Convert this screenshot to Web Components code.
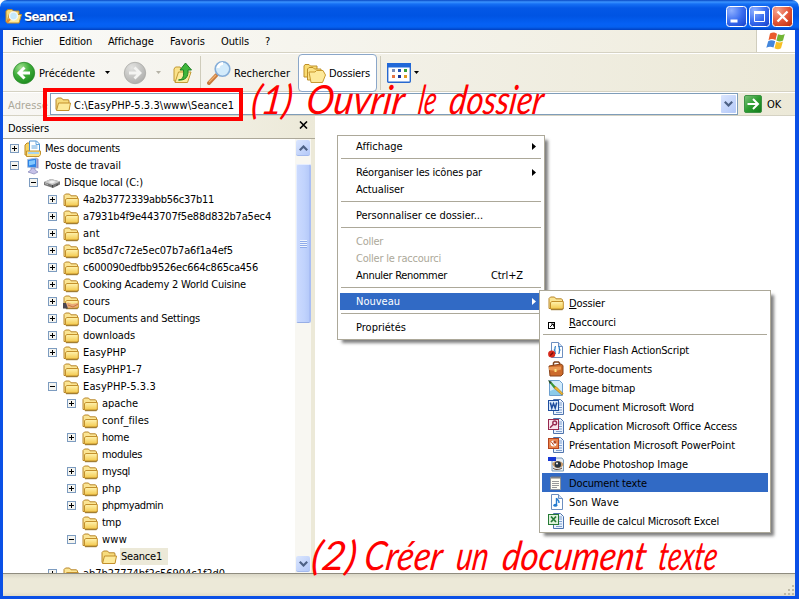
<!DOCTYPE html>
<html lang="fr">
<head>
<meta charset="utf-8">
<title>Seance1</title>
<style>
html,body{margin:0;padding:0;width:799px;height:599px;overflow:hidden;background:#fff}
body{font:11px/17px "DejaVu Sans Condensed","DejaVu Sans",sans-serif;color:#000;position:relative}
</style>
</head>
<body>
<xp-window></xp-window>
<script>
const define=(name,html,init)=>{
  const t=document.createElement('template');t.innerHTML=html;
  customElements.define(name,class extends HTMLElement{
    constructor(){super();this.attachShadow({mode:'open'}).append(t.content.cloneNode(true));}
    connectedCallback(){if(!this.ready){this.ready=true;init&&init.call(this,this.shadowRoot);}}
  });
};

/* Icon drawings */
const page='<path d="M3.5 .5h7l4 4v11h-11z" fill="#fff" stroke="#6d8fc0"/><path d="M10.500.5v4h4" fill="#cfe0f5" stroke="#6d8fc0"/>';
const office=(c,d,g)=>`<path d="M5.500.5h7l3 3v12h-10z" fill="#eaf2fd" stroke="#4f74ad"/><path d="M11 4h3M11 6h3M11 8.500h3M11 11h3M8 13.500h6" stroke="#7f9fce"/><rect x=".5" y="1.500" width="10" height="10" fill="${d}" stroke="${c}"/>${g}`;
const winBtn=(a,b,c,g)=>`<defs><radialGradient id="g" cx=".25" cy=".2" r="1"><stop offset="0" stop-color="${a}"/><stop offset=".55" stop-color="${b}"/><stop offset="1" stop-color="${c}"/></radialGradient></defs><rect x=".5" y=".5" width="20" height="20" rx="3" fill="url(#g)" stroke="#fff"/>${g}`;
const folder='<defs><linearGradient id="f" x2="0" y2="1"><stop offset="0" stop-color="#fff3b0"/><stop offset="1" stop-color="#f3c84b"/></linearGradient></defs><path d="M1 13.500V3.500L2.500 2H6.500L8 3.800H13.500L14.500 5V13.500z" fill="#fbe594" stroke="#b8862a"/><path d="M2.500 14V7.500L4 6.500H15.300V13L14 14z" fill="url(#f)" stroke="#c3902c"/><path d="M3 14.700h11.500L15.800 13.300" fill="none" stroke="#8a6210" stroke-width=".9"/>';
const ICONS={
folder:[16,16,folder],
folderopen:[16,16,'<path d="M1 13.500V3.500L2.500 2H6.500L8 3.800H13.500L14 5V13.500z" fill="#f7dc7d" stroke="#b8862a"/><path d="M1.500 14.500L3.500 7H15.500L14 14.500z" fill="#fdea9a" stroke="#c3902c"/>'],
shared:[16,16,folder+'<path d="M2 13.500V10l3-1.500 4 1.500 6-1v3.500l-5 1.500z" fill="#e9a979"/><path d="M0 9h3l2 5.500H0z" fill="#4b4650"/><path d="M5 11l5 2 5-3" fill="none" stroke="#c9783f"/>'],
docs:[18,18,'<path d="M1 15V5l2-2h5v13z" fill="#f7d463" stroke="#bd8a24"/><path d="M5.500 1h7l3 3v9h-10z" fill="#fff" stroke="#4e90cf"/><path d="M12 1v3.500h3.500M7.500 6h6M7.500 8h6" stroke="#62a5df" fill="none"/><path d="M2.500 11h14v3.500L15 16.500H2.500z" fill="#fbe38a" stroke="#c49430"/><path d="M4 12h11v2H4z" fill="#a7d6f3"/>'],
computer:[18,18,'<path d="M3.500 2.500L12.500 1v10l-9-.8z" fill="#2d83e6" stroke="#a9bfdf"/><path d="M5 4l6-1v4L5 8.500z" fill="#82c8ff"/><path d="M12.700 1l1.800 1v9.500l-2-.5z" fill="#9290c4"/><path d="M7 11l4 .3V13l3 2-4 2-6-2 3-2z" fill="#c6c2e8" stroke="#8585b8" stroke-width=".7"/>'],
disk:[18,18,'<path d="M1 8l7-3 9 2.500v3L10 14 1 11z" fill="#777"/><path d="M1 8l7-3 9 2.500L9.500 11z" fill="#c9c9c9"/><path d="M5 8l4-1.500 4 1.200L9 9.500z" fill="#f3f3f3"/><path d="M9.500 11v2.500M13 11.500l2-1" stroke="#444"/><path d="M2 9.500l3 1" stroke="#bbb"/>'],
title:[17,17,'<path d="M1 14V3l2-1.500h4L8.500 3H14v11z" fill="#f8dc78" stroke="#b8862a"/><path d="M2 15L4 6.500h12.500L14 15z" fill="#fdea9a" stroke="#c3902c"/><circle cx="8.500" cy="8" r="4" fill="#c4e8fb" stroke="#eef6fa" stroke-width="1.500"/><path d="M5 11L2 14.500" stroke="#e9862c" stroke-width="2"/>'],
min:[21,21,winBtn('#8fb0ff','#3a6df0','#1a45cf','<rect x="4.500" y="13.500" width="7" height="3" fill="#fff"/>')],
max:[21,21,winBtn('#8fb0ff','#3a6df0','#1a45cf','<path d="M5.500 5.500h10v10h-10z" fill="none" stroke="#fff"/><path d="M5 6.500h11" stroke="#fff" stroke-width="3"/>')],
close:[21,21,winBtn('#f5a48e','#e4573a','#c3310f','<path d="M5.500 5.500l10 10M15.500 5.500l-10 10" stroke="#fff" stroke-width="2.300"/>')],
back:[24,24,'<defs><radialGradient id="b" cx=".35" cy=".25" r=".8"><stop offset="0" stop-color="#a0e08e"/><stop offset=".5" stop-color="#3fae3b"/><stop offset="1" stop-color="#1c8a1e"/></radialGradient></defs><circle cx="12" cy="12" r="10.700" fill="url(#b)" stroke="#2a8a2a" stroke-width=".8"/><path d="M18 12H7.500M12.500 6.500L7 12l5.500 5.500" fill="none" stroke="#fff" stroke-width="3"/>'],
fwd:[24,24,'<defs><radialGradient id="n" cx=".35" cy=".25" r=".8"><stop offset="0" stop-color="#e2e2e0"/><stop offset="1" stop-color="#aeaeac"/></radialGradient></defs><circle cx="12" cy="12" r="10.700" fill="url(#n)" stroke="#a9a9a6" stroke-width=".8"/><path d="M6 12h10.500M11.500 6.500L17 12l-5.500 5.500" fill="none" stroke="#f4f4f2" stroke-width="2.800"/>'],
up:[22,24,'<path d="M2 20V8l1.500-2H8l1.500 2H12v13z" fill="#fbe28b" stroke="#c29a35"/><path d="M3 21.500L6.500 11H19l-3.500 10.500z" fill="#fdeb9d" stroke="#c29a35"/><path d="M6.500 19c5-.5 5.500-4 5-10H8l5.500-7L19.500 9H16c.5 7-2.500 10.500-9.500 10z" fill="#3fb63b" stroke="#1d7f22"/>'],
search:[25,25,'<path d="M9.500 15L2 23" stroke="#c77a3d" stroke-width="4" stroke-linecap="round"/><path d="M9 15L2 22" stroke="#f1b26f" stroke-width="1.200"/><circle cx="15.500" cy="9" r="7.300" fill="#d3ebfb" stroke="#86aed8" stroke-width="1.600"/><path d="M11 8a5 5 0 0 1 5-4.500" stroke="#fff" stroke-width="3" fill="none"/>'],
folders:[24,22,'<path d="M1 15V4l1-1.500h4L7.500 4H14v11z" fill="#f9dc72" stroke="#bf9028"/><path d="M4.500 18V7L6 5.500h4L11.500 7H18v11z" fill="#fbe286" stroke="#bf9028"/><path d="M8 20.500L6 10h6l1.500-1.500H20L22.500 13 19.500 20.500z" fill="#fde99a" stroke="#c8992e"/>'],
views:[24,20,'<rect x=".7" y=".7" width="22.600" height="18.600" rx="1" fill="#fff" stroke="#2869cf" stroke-width="1.400"/><path d="M0 0h24v4.500H0z" fill="#2168d8"/><g><path d="M5 6h3v3H5z" fill="#7c8fb8"/><path d="M11 6h3v3h-3z" fill="#2855b5"/><path d="M17 6h3v3h-3z" fill="#35a03b"/><path d="M5 12h3v3H5z" fill="#e77442"/><path d="M11 12h3v3h-3z" fill="#1c3795"/><path d="M17 12h3v3h-3z" fill="#e19b20"/></g>'],
arrow:[5,3,'<path d="M0 0h5L2.500 3z" fill="currentColor"/>'],
right:[4,7,'<path d="M0 0l4 3.500L0 7z" fill="currentColor"/>'],
flag:[22,20,'<path d="M5 2.500c3-1.700 4.500-1 7 .2L10.500 9c-3-1.300-4.500-1.200-7 .2z" fill="#ea5b2c"/><path d="M13 3.200c3 1.200 4.500 1 6.800-.2L18 9.600c-2.500 1.200-4 1.100-6.600 0z" fill="#72b536"/><path d="M3.200 10.200c2.500-1.500 4-1.300 7 0L8.500 16.500c-2.500-1.200-4.500-1.200-7.200.3z" fill="#4386dc"/><path d="M11.200 10.700c2.700 1.200 4.200 1 6.700-.1L16 17.300c-2.500 1.300-4 1-6.500 0z" fill="#f7bf25"/>'],
go:[18,18,'<defs><linearGradient id="o" x2="1" y2="1"><stop offset="0" stop-color="#7fc47c"/><stop offset=".5" stop-color="#2c9c30"/><stop offset="1" stop-color="#127a1a"/></linearGradient></defs><rect x=".5" y=".5" width="17" height="17" rx="1.500" fill="url(#o)" stroke="#3f9346"/><path d="M3.500 9h10M9 4l5 5-5 5" fill="none" stroke="#fff" stroke-width="2"/>'],
x:[9,8,'<path d="M1 .5l7 7M8 .5l-7 7" stroke="#000" stroke-width="1.600"/>'],
down:[9,6,'<path d="M.8.800L4.500 4.500 8.200.8" fill="none" stroke="#4d6185" stroke-width="2.200"/>'],
upc:[9,6,'<path d="M.8 5.200L4.500 1.500 8.200 5.200" fill="none" stroke="#4d6185" stroke-width="2.200"/>'],
shortcut:[16,16,'<rect x=".5" y="8.500" width="6" height="6" fill="#fff" stroke="#000"/><path d="M2 13L5 10M3 10h2.500v2.500" stroke="#000" fill="none" stroke-width=".9"/>'],
flash:[16,16,page+'<path d="M8 4.500c-2 0 0 2.500-1.600 3.500 1.600 1-.4 3.500 1.600 3.500M10.300 4.500c2 0 0 2.500 1.600 3.500-1.600 1 .4 3.500-1.600 3.500" fill="none" stroke="#2679c5" stroke-width="1.200"/><circle cx="3.700" cy="12" r="3.600" fill="#d72a1c"/><path d="M2.200 13.500l3-3" stroke="#7c0e08" stroke-width="1.300"/>'],
brief:[16,16,'<path d="M5.500 5V2l1-1h4l1 1v3" fill="none" stroke="#7d411a" stroke-width="1.500"/><path d="M1 5l12-2 2 1.500V13l-2 2H2z" fill="#cc6a2a" stroke="#8a441a"/><path d="M1 6l12-.5v3L8 10 1 9z" fill="#ea9852"/><path d="M6.500 8h2v3h-2z" fill="#ffe17b"/>'],
bitmap:[16,16,'<path d="M1.500.5h10l3 3v12h-13z" fill="#d3ebfb" stroke="#6d9fce"/><path d="M2 11l5-2 7 3v3H2z" fill="#8dcbe9"/><path d="M1 2l3 .5L8 7 6 8.500z" fill="#3c973a"/><path d="M6 8l2-1.500 7 7-1 1.500z" fill="#f1b72f" stroke="#a66d0c" stroke-width=".6"/><path d="M0 0l4 2-2 2z" fill="#264a26"/>'],
word:[16,16,office('#1f4e9f','#dce9fb','<path d="M2.300 3.500L3.800 9l1.700-4.500L7.200 9l1.500-5.500" fill="none" stroke="#1d4b9c" stroke-width="1.500"/>')],
access:[16,16,office('#97284f','#f8e3ec','<circle cx="6.700" cy="4.900" r="1.900" fill="none" stroke="#97284f" stroke-width="1.400"/><path d="M5.500 6.200L2 9.700" stroke="#97284f" stroke-width="1.500"/>')],
ppt:[16,16,office('#b4441e','#e9844d','<circle cx="5.500" cy="6.500" r="3" fill="#fff"/><path d="M5.500 6.500V3.500a3 3 0 0 1 3 3z" fill="#b4441e"/><path d="M3 4.500l3 4" stroke="#b4441e"/>')],
excel:[16,16,office('#257a35','#dff2dc','<path d="M3 3.500l5 5.500M8 3.500L3 9" stroke="#257a35" stroke-width="1.700"/>')],
psd:[16,16,'<path d="M4 2h10l1.500 2v11H4z" fill="#e6edf4" stroke="#7c9cba"/><path d="M4 8c2-4 9-4 11.500 0-1 5-9 6-11.500 0z" fill="#c79a6a"/><circle cx="9.800" cy="8.500" r="3.200" fill="#27333f"/><circle cx="9" cy="7.500" r="1" fill="#fff"/><path d="M0 1h8v4H0z" fill="#1739d6"/><path d="M5 12c2 2 6 2 9 0" stroke="#594236" fill="none"/>'],
text:[16,16,'<path d="M2.500 2.500h10v12h-10z" fill="#fffef2" stroke="#8b929c"/><path d="M4 1v3M6 1v3M8 1v3M10 1v3M12 1v3" stroke="#777"/><path d="M4 6.500h7M4 8.500h7M4 10.500h7M4 12.500h5" stroke="#999"/>'],
wave:[16,16,page+'<path d="M8.500 4v7.500M8.500 4c.5 2 3 2 2.500 5" fill="none" stroke="#247bd0" stroke-width="1.400"/><ellipse cx="7.300" cy="11.300" rx="2" ry="1.500" fill="#247bd0"/>'],
plus:[9,9,'<rect x=".5" y=".5" width="8" height="8" fill="#f4f4f0" stroke="#7d9cc0"/><path d="M2 4.500h5M4.500 2v5" stroke="#000"/>'],
minus:[9,9,'<rect x=".5" y=".5" width="8" height="8" fill="#f4f4f0" stroke="#7d9cc0"/><path d="M2 4.500h5" stroke="#000"/>'],
grip:[12,12,'<g fill="#bdb9a5"><path d="M9 1h2v2H9zM9 5h2v2H9zM9 9h2v2H9zM5 5h2v2H5zM5 9h2v2H5zM1 9h2v2H1z"/></g>']
};
define('xp-icon','<style>:host{display:block;flex:none}svg{display:block}</style><div></div>',function(r){
  const [w,h,s]=ICONS[this.getAttribute('name')];
  r.querySelector('div').innerHTML=`<svg width="${w}" height="${h}" viewBox="0 0 ${w} ${h}">${s}</svg>`;
});

/* Label that spreads its letters over the width given in "w" */
define('xp-label','<style>:host{display:block;flex:none;white-space:pre}span{display:inline-block}</style><span></span>',function(r){
  const s=r.querySelector('span'),w=+this.getAttribute('w'),t=this.getAttribute('text'),k=this.getAttribute('key');
  if(k){const u=document.createElement('u');u.textContent=t[0];s.append(u,t.slice(1));}else s.textContent=t;
  this.style.width=w+'px';
  s.style.letterSpacing=((w-s.getBoundingClientRect().width)/t.length)+'px';
});

define('tree-row',`<style>
:host{display:flex;align-items:center;height:17px;flex:none}
.t{width:9px;margin-right:5px}.i{width:20px;display:flex;justify-content:center;flex:none}
.l{padding:1px 1px 0;line-height:16px}
:host([sel]) .l{background:#ece9d8;padding-right:6px}
</style><div class="t"></div><div class="i"></div><div class="l"></div>`,function(r){
  const a=n=>this.getAttribute(n);
  this.style.paddingLeft=(7+19*a('d'))+'px';
  if(a('t'))r.querySelector('.t').innerHTML=`<xp-icon name="${a('t')}"></xp-icon>`;
  r.querySelector('.i').innerHTML=`<xp-icon name="${a('i')}" style="margin-left:-2px"></xp-icon>`;
  r.querySelector('.l').innerHTML=`<xp-label w="${a('w')}" text="${a('l')}"></xp-label>`;
});

define('xp-titlebar',`<style>
:host{display:flex;align-items:center;height:30px;box-sizing:border-box;padding:2px 6px 0 5px;border-radius:7px 7px 0 0;
background:linear-gradient(#0848c4 0,#3b94ff 2px,#1670f4 4px,#0458e6 8px,#0054e3 16px,#0561f5 24px,#0560f0 27px,#0040c0 30px)}
xp-label{margin:2px 0 0 2px;color:#fff;font:bold 13px/18px "DejaVu Sans Condensed",sans-serif;text-shadow:1px 1px 1px #0a246a}
.b{display:flex;gap:2px;margin-left:auto}
</style><xp-icon name="title"></xp-icon><xp-label w="50" text="Seance1"></xp-label><div class="b"><xp-icon name="min"></xp-icon><xp-icon name="max"></xp-icon><xp-icon name="close"></xp-icon></div>`);

define('xp-menubar',`<style>
:host{display:flex;align-items:stretch;height:22px;border-bottom:1px solid #d5d2c3;background:linear-gradient(90deg,#fafaf8,#efecdd)}
.m{display:flex;gap:16px;padding:3px 0 0 9px;flex:1}
.f{width:38px;background:#fff;border-left:1px solid #d0cdbd;display:flex;justify-content:center;align-items:center}
</style><div class="m"><xp-label w="31" text="Fichier"></xp-label><xp-label w="33" text="Edition"></xp-label><xp-label w="46" text="Affichage"></xp-label><xp-label w="35" text="Favoris"></xp-label><xp-label w="28" text="Outils"></xp-label><xp-label w="6" text="?"></xp-label></div><div class="f"><xp-icon name="flag"></xp-icon></div>`);

define('xp-toolbar',`<style>
:host{display:flex;align-items:center;height:39px;box-sizing:border-box;border-top:1px solid #fff;border-bottom:1px solid #d5d2c3;background:linear-gradient(90deg,#f8f7f4,#ece9d8)}
.s{width:1px;height:34px;background:#cfccbb}
xp-label{padding-top:2px}
.d{display:flex;align-items:center;box-sizing:border-box;width:79px;height:38px;padding-left:4px;gap:3px;border:1px solid #8ba7c9;border-radius:4px;background:#fff;margin-left:8px}
.g{color:#b5b2a6}
</style><xp-icon name="back" style="margin-left:9px"></xp-icon><xp-label w="56" text="Précédente" style="margin-left:3px"></xp-label><xp-icon name="arrow" style="margin-left:10px"></xp-icon>
<xp-icon name="fwd" style="margin-left:13px"></xp-icon><xp-icon class="g" name="arrow" style="margin-left:9px"></xp-icon><xp-icon name="up" style="margin-left:11px"></xp-icon><div class="s" style="margin-left:6px"></div>
<xp-icon name="search" style="margin-left:6px"></xp-icon><xp-label w="56" text="Rechercher" style="margin-left:2px"></xp-label><div class="d"><xp-icon name="folders"></xp-icon><xp-label w="41" text="Dossiers" style="margin-left:-1px"></xp-label></div>
<div class="s" style="margin-left:3px"></div><xp-icon name="views" style="margin-left:6px"></xp-icon><xp-icon name="arrow" style="margin-left:3px"></xp-icon>`);

define('xp-address',`<style>
:host{display:flex;align-items:center;height:24px;box-sizing:border-box;padding-left:5px;border-top:1px solid #fff;border-bottom:1px solid #d5d2c3;background:linear-gradient(90deg,#f8f7f4,#ece9d8)}
.a{color:#aca899}
.box{display:flex;align-items:center;box-sizing:border-box;width:688px;height:22px;margin-left:2px;border:1px solid #7f9db9;background:#fff;padding:0 1px 0 4px}
.dd{width:15px;height:18px;margin-left:auto;display:flex;align-items:center;justify-content:center;border-radius:1px;background:linear-gradient(135deg,#dbe6fe,#b3c8f8)}
</style><xp-label class="a" w="40" text="Adresse" style="padding-top:2px"></xp-label><div class="box"><xp-icon name="folderopen"></xp-icon><xp-label w="160" text="C:\\EasyPHP-5.3.3\\www\\Seance1" style="margin-left:3px;padding-top:3px"></xp-label><div class="dd"><xp-icon name="down"></xp-icon></div></div><xp-icon name="go" style="margin-left:6px"></xp-icon><xp-label w="14" text="OK" style="margin-left:5px;padding-top:1px"></xp-label>`);

define('xp-scrollbar',`<style>
:host{display:flex;flex-direction:column;width:16px;flex:none;background:#f8f7f2}
.b{height:15px;margin:1px;border-radius:2px;display:flex;align-items:center;justify-content:center;background:linear-gradient(135deg,#dbe6fe,#b3c8f8);border-bottom:1px solid #a3b9ec}
.th{box-sizing:border-box;height:159px;margin:7px 0 0 1px;border-radius:2px;border:1px solid #e5edff;border-bottom-color:#97aee6;border-right:2px solid #a9bef5;background:linear-gradient(90deg,#cbdafe,#c1d3fd 60%,#b6caf9);display:flex;align-items:center;justify-content:center}
.g{width:7px;height:8px;background:repeating-linear-gradient(#eef4fe 0 1px,#8fabea 1px 2px)}
</style><div class="b"><xp-icon name="upc"></xp-icon></div><div class="th"><div class="g"></div></div><div class="b" style="margin-top:auto"><xp-icon name="down"></xp-icon></div>`);

const H='plus',F='folder';
const ROWS=[[0,H,'docs','Mes documents',75],[0,'minus','computer','Poste de travail',76],[1,'minus','disk','Disque local (C:)',79],
[2,H,F,'4a2b3772339abb56c37b11',131],[2,H,F,'a7931b4f9e443707f5e88d832b7a5ec4',188],[2,H,F,'ant',17],[2,H,F,'bc85d7c72e5ec07b7a6f1a4ef5',150],[2,H,F,'c600090edfbb9526ec664c865ca456',175],[2,H,F,'Cooking Academy 2 World Cuisine',163],[2,H,'shared','cours',27],[2,H,F,'Documents and Settings',117],[2,H,F,'downloads',52],[2,H,F,'EasyPHP',43],[2,'',F,'EasyPHP1-7',59],[2,'minus',F,'EasyPHP-5.3.3',73],
[3,H,F,'apache',36],[3,'',F,'conf_files',47],[3,H,F,'home',27],[3,'',F,'modules',40],[3,H,F,'mysql',28],[3,H,F,'php',19],[3,H,F,'phpmyadmin',61],[3,'',F,'tmp',19],[3,'minus',F,'www',25],[4,'','folderopen','Seance1',41],[2,H,F,'ab7b27774bf2c56904c1f2d0',142]];
define('folder-pane',`<style>
:host{display:flex;flex-direction:column;width:312px;flex:none;background:#ece9d8;overflow:hidden}
.h{display:flex;align-items:center;justify-content:space-between;box-sizing:border-box;height:23px;padding:2px 7px 0 5px;border-bottom:1px solid #aca899;background:linear-gradient(90deg,#fafaf8,#ece9d8)}
.h xp-icon{margin-top:-6px}
.b{display:flex;flex:1;min-height:0;padding-right:4px}
.t{flex:1;background:#fff;padding-top:1px;overflow:hidden;display:flex;flex-direction:column}
</style><div class="h"><xp-label w="41" text="Dossiers"></xp-label><xp-icon name="x"></xp-icon></div><div class="b"><div class="t"></div><xp-scrollbar></xp-scrollbar></div>`,r=>{
  r.querySelector('.t').innerHTML=ROWS.map(([d,t,i,l,w])=>`<tree-row d="${d}" t="${t}" i="${i}" l="${l}" w="${w}"${l=='Seance1'?' sel':''}></tree-row>`).join('');
});

define('menu-item',`<style>
:host{display:flex;align-items:center;height:17px;flex:none;padding-left:16px}
:host([icon]){height:19px;padding-left:6px}
:host([icon]) .i{width:21px}
:host([icon]) .l{padding-top:1px}
:host([off]){color:#aca899}
:host([hot]){background:#316ac5}
:host([white]){color:#fff}
.k{margin-left:auto;display:flex;padding-right:6px}
</style><div class="i"></div><div class="l"></div><div class="k"></div>`,function(r){
  const a=n=>this.getAttribute(n);
  if(a('icon'))r.querySelector('.i').innerHTML=`<xp-icon name="${a('icon')}"></xp-icon>`;
  r.querySelector('.l').innerHTML=`<xp-label w="${a('w')}" text="${a('l')}"${a('key')?' key="1"':''}></xp-label>`;
  if(a('sub')!==null)r.querySelector('.k').innerHTML='<xp-icon name="right"></xp-icon>';
  if(a('short'))r.querySelector('.k').innerHTML=`<xp-label w="32" text="${a('short')}" style="margin-right:13px"></xp-label>`;
});
define('menu-sep','<style>:host{display:block;height:9px;box-sizing:border-box;padding:3px 1px 0;flex:none}i{display:block;height:1px;background:#aca899}</style><i></i>');
define('popup-menu','<style>:host{display:flex;flex-direction:column;box-sizing:border-box;position:absolute;background:#fff;border:1px solid #aca899;padding:2px;box-shadow:4px 4px 3px -1px rgba(0,0,0,.5)}</style><slot></slot>');

/* Red handwritten captions, word by word */
define('red-note',`<style>:host{position:absolute;left:0;top:0;width:799px;height:599px;pointer-events:none}svg{display:block}
text{font-family:Lato,"Liberation Sans",sans-serif;font-style:italic;font-weight:400;font-size:40px;fill:#f00}</style><svg width="799" height="599"></svg>`,function(r){
  const W=[['(1)',250,44,114],['Ouvrir',305,101,114],['le',417,21,114],['dossier',448,97,114],['(2)',310,48,570],['Créer',363,81,570],['un',455,35,570],['document',501,147,570],['texte',657,62,570]];
  /* words lean further than the italic itself, around their own baseline */
  r.querySelector('svg').innerHTML=W.map(([t,x,w,y])=>`<text transform="translate(${x} ${y}) skewX(-8)" textLength="${w-3}" lengthAdjust="spacingAndGlyphs">${t}</text>`).join('');
});

define('xp-window',`<style>
:host{display:flex;flex-direction:column;width:799px;height:599px;position:relative;overflow:hidden}
.f{display:flex;flex-direction:column;flex:1;min-height:0;border:solid #0a50e6;border-width:0 4px 3px 3px;background:#ece9d8}
.c{display:flex;flex:1;min-height:0;background:#fff}
.s{display:flex;justify-content:flex-end;align-items:flex-end;height:23px;box-sizing:border-box;border-top:1px solid #8f8c7f;background:linear-gradient(#dad7c7,#ece9d8 5px,#ece9d8 18px,#dfdbc8)}
.r{position:absolute;left:43px;top:88px;width:200px;height:33px;box-sizing:border-box;border:4px solid #f00}
</style><xp-titlebar></xp-titlebar><div class="f"><xp-menubar></xp-menubar><xp-toolbar></xp-toolbar><xp-address></xp-address><div class="c"><folder-pane></folder-pane></div><div class="s"><xp-icon name="grip"></xp-icon></div></div>
<popup-menu style="left:337px;top:135px;width:208px;height:205px">
<menu-item l="Affichage" w="47" sub></menu-item><menu-sep></menu-sep>
<menu-item l="Réorganiser les icônes par" w="126" sub></menu-item><menu-item l="Actualiser" w="48"></menu-item><menu-sep></menu-sep>
<menu-item l="Personnaliser ce dossier..." w="127"></menu-item><menu-sep></menu-sep>
<menu-item l="Coller" w="27" off></menu-item><menu-item l="Coller le raccourci" w="85" off></menu-item><menu-item l="Annuler Renommer" w="91" short="Ctrl+Z"></menu-item><menu-sep></menu-sep>
<menu-item l="Nouveau" w="44" hot white sub></menu-item><menu-sep></menu-sep><menu-item l="Propriétés" w="50"></menu-item></popup-menu>
<popup-menu style="left:539px;top:290px;width:232px;height:243px">
<menu-item icon="folder" l="Dossier" w="36" key="1"></menu-item><menu-item icon="shortcut" l="Raccourci" w="47" key="1"></menu-item><menu-sep></menu-sep>
<menu-item icon="flash" l="Fichier Flash ActionScript" w="120"></menu-item><menu-item icon="brief" l="Porte-documents" w="83"></menu-item><menu-item icon="bitmap" l="Image bitmap" w="66"></menu-item><menu-item icon="word" l="Document Microsoft Word" w="125"></menu-item><menu-item icon="access" l="Application Microsoft Office Access" w="168"></menu-item><menu-item icon="ppt" l="Présentation Microsoft PowerPoint" w="166"></menu-item><menu-item icon="psd" l="Adobe Photoshop Image" w="119"></menu-item><menu-item icon="text" l="Document texte" w="78" hot></menu-item><menu-item icon="wave" l="Son Wave" w="50"></menu-item><menu-item icon="excel" l="Feuille de calcul Microsoft Excel" w="150"></menu-item></popup-menu>
<div class="r"></div><red-note></red-note>`);
</script>
</body>
</html>
